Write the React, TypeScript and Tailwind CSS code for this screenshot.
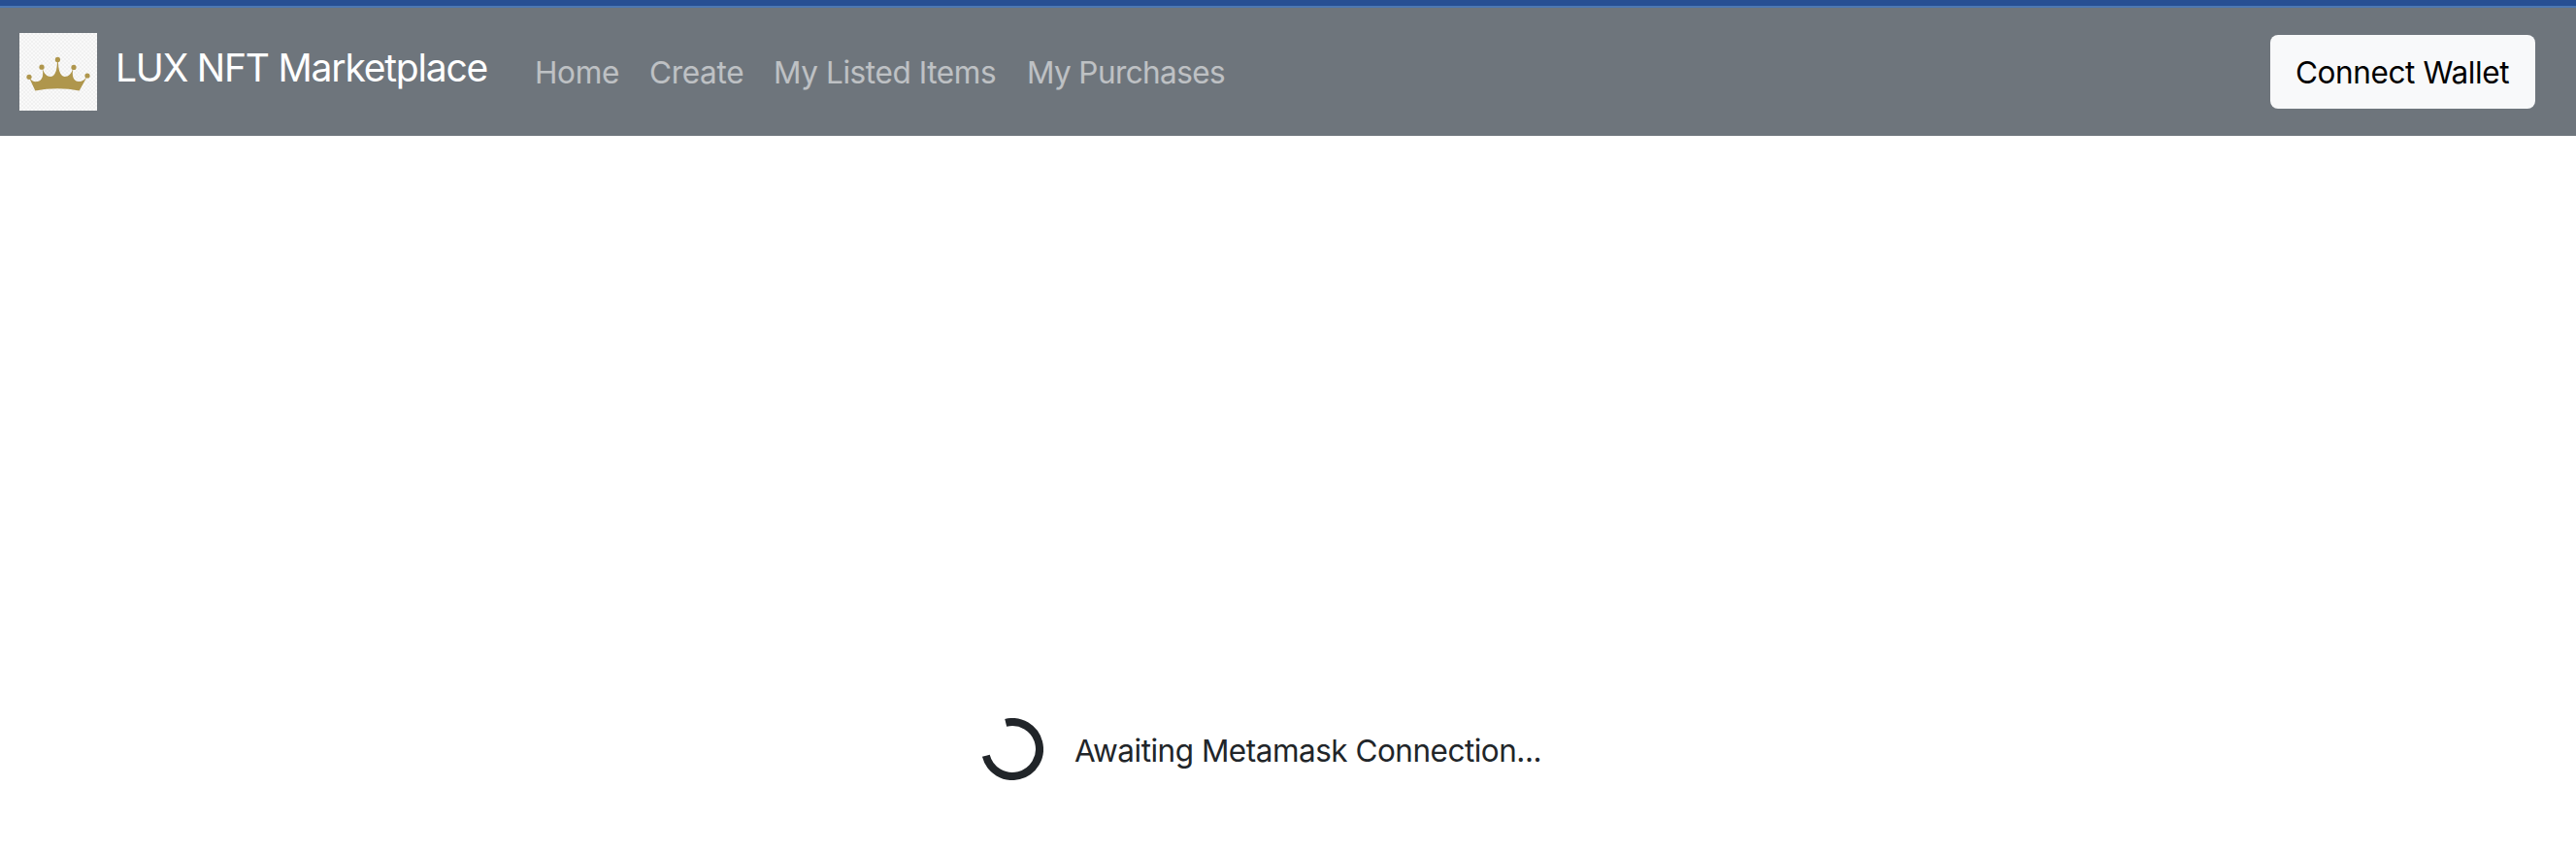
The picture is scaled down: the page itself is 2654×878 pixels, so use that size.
const links = [
  { label: 'Home', style: 'w-[118px] tracking-[-0.3px]' },
  { label: 'Create', style: 'w-[128px] tracking-[-0.3px]' },
  { label: 'My Listed Items', style: 'w-[261px] tracking-[-0.4px]' },
  { label: 'My Purchases', style: 'tracking-[-0.6px]' },
];

function CrownLogo() {
  return (
    <svg width="80" height="80" viewBox="0 0 80 80" className="block shrink-0">
      <defs>
        <pattern id="checker" width="4" height="4" patternUnits="userSpaceOnUse">
          <rect width="4" height="4" fill="#f9f9f9" />
          <rect width="2" height="2" fill="#f1f1f1" />
          <rect x="2" y="2" width="2" height="2" fill="#f1f1f1" />
        </pattern>
      </defs>
      <rect width="80" height="80" fill="url(#checker)" />
      <g fill="#af964c">
        <circle cx="10" cy="45.3" r="2.6" />
        <circle cx="23" cy="35.2" r="2.6" />
        <circle cx="39.4" cy="27.4" r="2.6" />
        <circle cx="56" cy="35.4" r="2.6" />
        <circle cx="70" cy="44" r="2.6" />
        <path d="M10 46 C12.500 49.500 15.500 50.600 18.500 50 C24 49 25.200 43 23.400 36 C25.500 42 28 45 32.500 45 C37 44.500 39 38 39 28 L39.800 28 C40 38 42 44.500 46.500 45 C51 45 53.500 42 55.600 36 C53.800 43 55 49 60.500 50 C64 50.500 67 48.500 70 44.500 L61.700 59.500 Q39.500 55 16.300 59.500 Z" />
      </g>
    </svg>
  );
}

export default function App() {
  return (
    <div className="flex h-[878px] flex-col bg-white font-['Inter',sans-serif] text-[31.5px] leading-[48px] text-[#212529]">
      <div className="h-2 shrink-0 border-b-2 border-[#4d78b3] bg-[#274f93]" />
      <nav className="flex h-[132px] shrink-0 items-center bg-[#6e757c] pr-[42px] pl-5">
        <CrownLogo />
        <span className="mb-2 ml-[19px] w-[432px] whitespace-nowrap text-[39px] font-[430] tracking-[-1.2px] text-white">
          LUX NFT Marketplace
        </span>
        <div className="flex flex-1 whitespace-nowrap pt-0.5 font-[430] text-white/55">
          {links.map((link) => (
            <a key={link.label} href="#" className={link.style}>
              {link.label}
            </a>
          ))}
        </div>
        <button className="h-[76px] w-[273px] whitespace-nowrap rounded-lg bg-[#f8f9fa] pt-0.5 pr-px tracking-[-0.4px] text-black">
          Connect Wallet
        </button>
      </nav>
      <main className="flex flex-1 items-end justify-start pb-[74px] pl-[1011px]">
        <div className="flex items-center gap-8">
          <svg width="64" height="64" viewBox="0 0 64 64" className="block">
            <circle
              cx="32"
              cy="32"
              r="28"
              fill="none"
              stroke="#212529"
              strokeWidth="8"
              pathLength="360"
              strokeDasharray="270 90"
              transform="rotate(-104 32 32)"
            />
          </svg>
          <p className="whitespace-nowrap pt-[3px] tracking-[-0.5px]">Awaiting Metamask Connection...</p>
        </div>
      </main>
    </div>
  );
}
